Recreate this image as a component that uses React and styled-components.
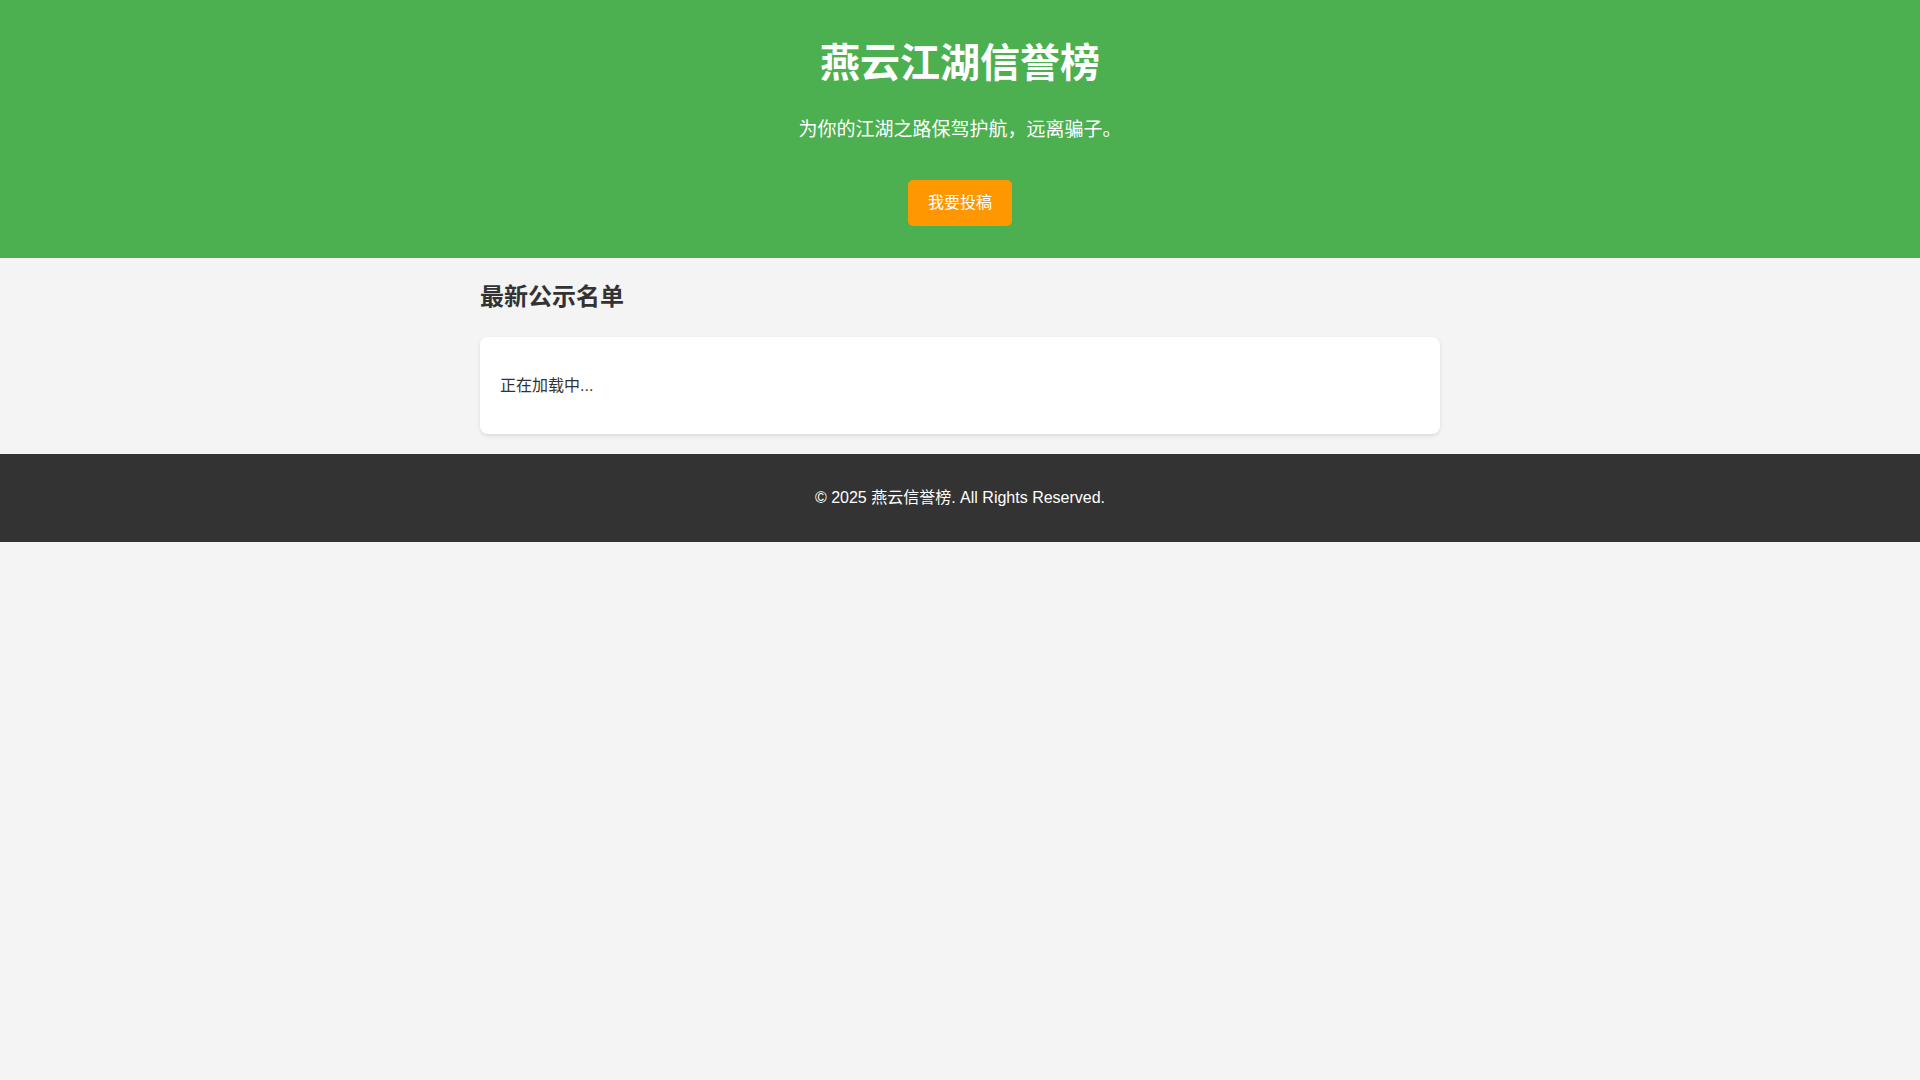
import React from "react";
import styled, { createGlobalStyle } from "styled-components";

const GlobalStyle = createGlobalStyle`
  html, body {
    margin: 0;
    padding: 0;
  }
  body {
    background: #f4f4f4;
    color: #333;
    font-family: "Liberation Sans", Arial, "Noto Sans CJK SC", sans-serif;
    line-height: 1.6;
  }
`;

const Header = styled.header`
  background: #4caf50;
  color: #fff;
  display: flex;
  flex-direction: column;
  align-items: center;
  text-align: center;
  padding: 31px 20px 32px;
`;

const Title = styled.h1`
  margin: 0;
  font-size: 2.5em;
  font-weight: bold;
`;

const Subtitle = styled.p`
  margin: 20px 0 0;
  font-size: 19px;
`;

const SubmitButton = styled.a`
  display: inline-block;
  margin-top: 35px;
  padding: 12px 20px;
  background: #ff9800;
  color: #fff;
  font-size: 16px;
  line-height: 22px;
  border-radius: 5px;
  text-decoration: none;
  cursor: pointer;
`;

const Main = styled.main`
  max-width: 960px;
  margin: 0 auto;
  padding: 20px 0;
`;

const SectionTitle = styled.h2`
  margin: 0 0 20px;
  font-size: 1.5em;
  color: #333;
`;

const Card = styled.div`
  background: #fff;
  border-radius: 8px;
  box-shadow: 0 2px 4px rgba(0, 0, 0, 0.1);
  padding: 20px;
`;

const Footer = styled.footer`
  background: #333;
  color: #fff;
  text-align: center;
  padding: 15px 20px;
`;

export default function App() {
  return (
    <>
      <GlobalStyle />
      <Header>
        <Title>燕云江湖信誉榜</Title>
        <Subtitle>为你的江湖之路保驾护航，远离骗子。</Subtitle>
        <SubmitButton>我要投稿</SubmitButton>
      </Header>
      <Main>
        <SectionTitle>最新公示名单</SectionTitle>
        <Card>
          <p>正在加载中...</p>
        </Card>
      </Main>
      <Footer>
        <p>© 2025 燕云信誉榜. All Rights Reserved.</p>
      </Footer>
    </>
  );
}
